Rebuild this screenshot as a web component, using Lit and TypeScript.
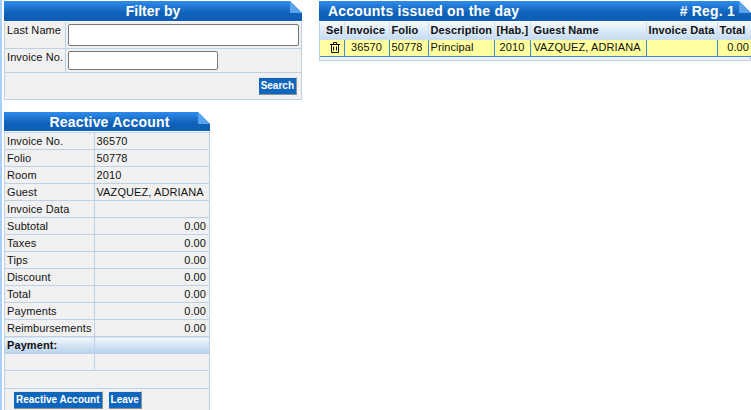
import { LitElement, html, css, svg } from "lit";
import { customElement } from "lit/decorators.js";

const cols = [
  ["Sel", 24], ["Invoice", 45], ["Folio", 39], ["Description", 66], ["[Hab.]", 36],
  ["Guest Name", 116], ["Invoice Data", 71], ["Total", 35],
] as const;

const rows: [string, string, boolean][] = [
  ["Invoice No.", "36570", false], ["Folio", "50778", false], ["Room", "2010", false],
  ["Guest", "VAZQUEZ, ADRIANA", false], ["Invoice Data", "", false], ["Subtotal", "0.00", true],
  ["Taxes", "0.00", true], ["Tips", "0.00", true], ["Discount", "0.00", true], ["Total", "0.00", true],
  ["Payments", "0.00", true], ["Reimbursements", "0.00", true],
];

const corner = svg`<svg class="corner" width="12" height="12" viewBox="0 0 12 12"><path d="M0 0H12V12Z" fill="#ffffff"/><path d="M0 0V12H12Z" fill="#5aa2ec"/></svg>`;

@customElement("app-root")
export class AppRoot extends LitElement {
  static styles = css`
    :host { display: block; width: 751px; height: 410px; overflow: hidden; background: #fff;
      font-family: "Liberation Sans", Arial, sans-serif; font-size: 11px; letter-spacing: .1px; color: #111; }
    .page { display: grid; grid-template-columns: 298px 432px; column-gap: 17px; padding: 1px 0 0 2px; border-left: 2px solid #a9d0fa; height: 409px; box-sizing: content-box; align-items: start; }
    .left { display: flex; flex-direction: column; gap: 12px; }
    .panel { background: #f1f1f1; border: 1px solid #bdd0e4; border-top: 0; box-sizing: border-box; }
    .head { height: 21px; box-sizing: border-box; margin: 0 -1px; background: linear-gradient(#2f8cec, #0f62b8 60%, #0d5fb5);
      color: #fff; font-weight: bold; font-size: 14px; line-height: 20px; text-align: center;
      letter-spacing: 0; position: relative; border-bottom: 1px solid #fff; }
    .corner { position: absolute; right: 0; top: 0; }
    table { border-collapse: collapse; table-layout: fixed; width: 100%; }
    td, th { box-sizing: border-box; border: 1px solid #bdd0e4; padding: 0 2px; overflow: hidden; white-space: nowrap; }
    tr > :first-child { border-left: 0; } tr > :last-child { border-right: 0; }
    tr:first-child > * { border-top: 0; } tr:last-child > * { border-bottom: 0; }
    .filter { width: 298px; height: 99px; }
    .filter .l { vertical-align: top; padding: 2px 2px 0 2px; }
    .filter .r1 td { height: 26px; } .filter .r2 td { height: 24px; }
    .filter .r3 td { height: 27px; text-align: right; padding-right: 4px; }
    .filter .inp { padding: 0 0 0 2px; }
    input { display: block; box-sizing: border-box; border: 1px solid #767676; border-radius: 2px; background: #fff; padding: 0; }
    .i1 { width: 231px; height: 22px; } .i2 { width: 150px; height: 19px; }
    .btn { display: inline-block; box-sizing: border-box; background: #0f66bd; color: #fff; font-weight: bold; font-size: 10px; letter-spacing: 0; line-height: 15px;
      height: 18px; padding: 0 2px; border: 0; border-right: 1px solid #8a9299; border-bottom: 1px solid #8a9299;
      border-top: 1px solid #e8e8e8; font-family: inherit; vertical-align: middle; }
    .accounts { width: 432px; height: 60px; }
    .accounts .head { text-align: left; padding: 0 16px 0 9px; display: flex; justify-content: space-between; letter-spacing: .2px; }
    .accounts th { height: 17px; background: linear-gradient(#f4f8fd, #c6dcf2); font-weight: bold; text-align: left; padding: 0 2px; border-color: #cfdded; }
    .accounts th:first-child { text-align: center; padding-left: 6px; }
    .accounts th:nth-child(6), .accounts td:nth-child(6) { padding-left: 3px; }
    .accounts td { height: 17px; background: #ffff9f; border-color: #3f89d6; font-size: 11px; padding: 0 2px 2px; }
    .accounts tr:last-child td { border-bottom: 1px solid #3f89d6; }
    .accounts .c { text-align: center; } .accounts .n { text-align: right; padding-right: 3px; }
    .trash { display: block; margin: 2px 0 0 8px; }
    .react { width: 206px; height: 302px; }
    .react .head { height: 20px; padding-left: 5px; letter-spacing: .2px; }
    .react td { height: 17px; padding: 0 3px 0 2px; }
    .react .num { text-align: right; }
    .react .pay td { background: linear-gradient(#f2f7fc, #b9d2ec); font-weight: bold; }
    .actions { display: flex; gap: 6px; padding: 2px 0 0 9px; border-top: 1px solid #bdd0e4; }
  `;

  render() {
    return html`<div class="page">
      <div class="left">
        <section class="panel filter">
          <div class="head">Filter by${corner}</div>
          <table>
            <colgroup><col style="width:60px" /><col /></colgroup>
            <tr class="r1"><td class="l">Last Name</td><td class="inp"><input class="i1" /></td></tr>
            <tr class="r2"><td class="l">Invoice No.</td><td class="inp"><input class="i2" /></td></tr>
            <tr class="r3"><td colspan="2"><button class="btn">Search</button></td></tr>
          </table>
        </section>
        <section class="panel react">
          <div class="head">Reactive Account${corner}</div>
          <table>
            <colgroup><col style="width:89px" /><col /></colgroup>
            ${rows.map(([k, v, n]) => html`<tr><td>${k}</td><td class=${n ? "num" : ""}>${v}</td></tr>`)}
            <tr class="pay"><td>Payment:</td><td></td></tr>
            <tr><td></td><td></td></tr>
            <tr><td colspan="2"></td></tr>
          </table>
          <div class="actions"><button class="btn">Reactive Account</button><button class="btn">Leave</button></div>
        </section>
      </div>
      <section class="panel accounts">
        <div class="head"><span>Accounts issued on the day</span><span># Reg. 1</span>${corner}</div>
        <table>
          <colgroup>${cols.map(([, w]) => html`<col style="width:${w}px" />`)}</colgroup>
          <tr>${cols.map(([n]) => html`<th>${n}</th>`)}</tr>
          <tr>
            <td><svg class="trash" width="10" height="11" viewBox="0 0 10 11" fill="none" stroke="#111" stroke-width="1"><path d="M0 2.5H10M3.5 2.5V.5H6.5V2.5M1.5 2.5V10.5H8.5V2.5M3.5 4.5V8.5M6.5 4.5V8.5"/></svg></td>
            <td class="c">36570</td><td>50778</td><td>Principal</td><td class="c">2010</td>
            <td>VAZQUEZ, ADRIANA</td><td></td><td class="n">0.00</td>
          </tr>
        </table>
      </section>
    </div>`;
  }
}
